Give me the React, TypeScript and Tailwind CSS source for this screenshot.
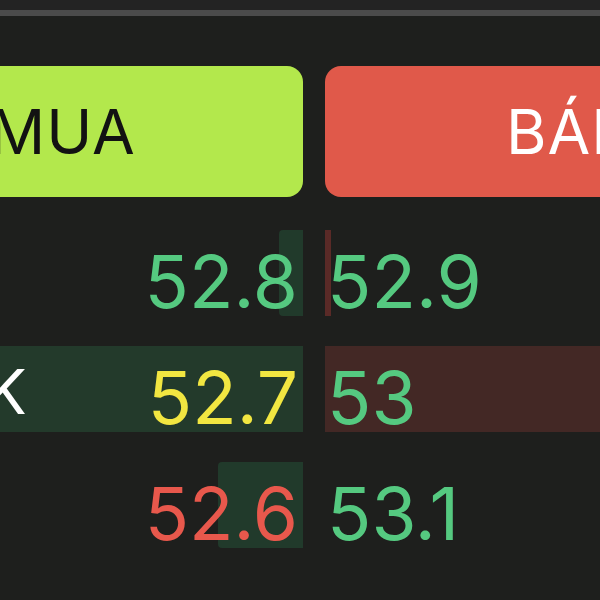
const rows = [
  {
    bid: "52.8",
    bidColor: "text-[#55c980]",
    ask: "52.9",
    askColor: "text-[#55c980]",
    bidBar: "w-[24px]",
    askBar: "w-[6px]",
    full: false,
  },
  {
    bid: "52.7",
    bidColor: "text-[#f2e641]",
    ask: "53",
    askColor: "text-[#55c980]",
    bidBar: "w-full",
    askBar: "w-full",
    full: true,
  },
  {
    bid: "52.6",
    bidColor: "text-[#e8584c]",
    ask: "53.1",
    askColor: "text-[#55c980]",
    bidBar: "w-[85px]",
    askBar: "w-0",
    full: false,
  },
];

export default function App() {
  return (
    <div
      className="w-[600px] h-[600px] overflow-hidden bg-[#1e1f1d] text-white"
      style={{ fontFamily: "Inter, 'Noto Sans', sans-serif" }}
    >
      {/* top edge */}
      <div className="h-[10px] bg-[#232323]" />
      <div className="h-[6px] bg-[#4b4b4b]" />

      <div className="ml-[-180px] w-[988px]">
        {/* Buttons */}
        <div className="mt-[50px] grid grid-cols-2 gap-[22px]">
          <div className="h-[131px] rounded-[16px] bg-[#b3e84c] flex items-center justify-center text-[#121212] text-[62px] tracking-[1px] pl-[2px]">
            MUA
          </div>
          <div className="h-[131px] rounded-[16px] bg-[#e0594a] flex items-center justify-center text-white text-[62px] tracking-[1px] pl-[12px]">
            BÁN
          </div>
        </div>

        {/* Order book */}
        <div className="mt-[33px] flex flex-col gap-[30px]">
          {rows.map((r, i) => (
            <div key={i} className="grid grid-cols-2 gap-[22px] h-[86px]">
              <div className="relative h-[86px]">
                <div
                  className={`absolute right-0 top-0 bottom-0 ${r.bidBar} ${
                    r.full ? "bg-[#233a2b]" : "bg-[#213a2b] rounded-l-[4px]"
                  }`}
                />
                {r.full && (
                  <div className="absolute left-[180px] top-0 bottom-0 w-[40px] overflow-hidden flex items-center pt-[6px]">
                    <span className="ml-[-15px] text-[62px] leading-none text-white">K</span>
                  </div>
                )}
                <div
                  className={`relative h-[86px] flex items-center justify-end pr-[5px] pt-[18px] text-[73px] leading-[60px] ${r.bidColor}`}
                >
                  {r.bid}
                </div>
              </div>
              <div className="relative h-[86px]">
                <div
                  className={`absolute left-0 top-0 bottom-0 ${r.askBar} ${
                    r.full ? "bg-[#432825]" : "bg-[#5a2a27]"
                  }`}
                />
                <div
                  className={`relative h-[86px] flex items-center pl-[2px] pt-[18px] text-[73px] leading-[60px] ${r.askColor}`}
                >
                  {r.ask}
                </div>
              </div>
            </div>
          ))}
        </div>
      </div>
    </div>
  );
}
